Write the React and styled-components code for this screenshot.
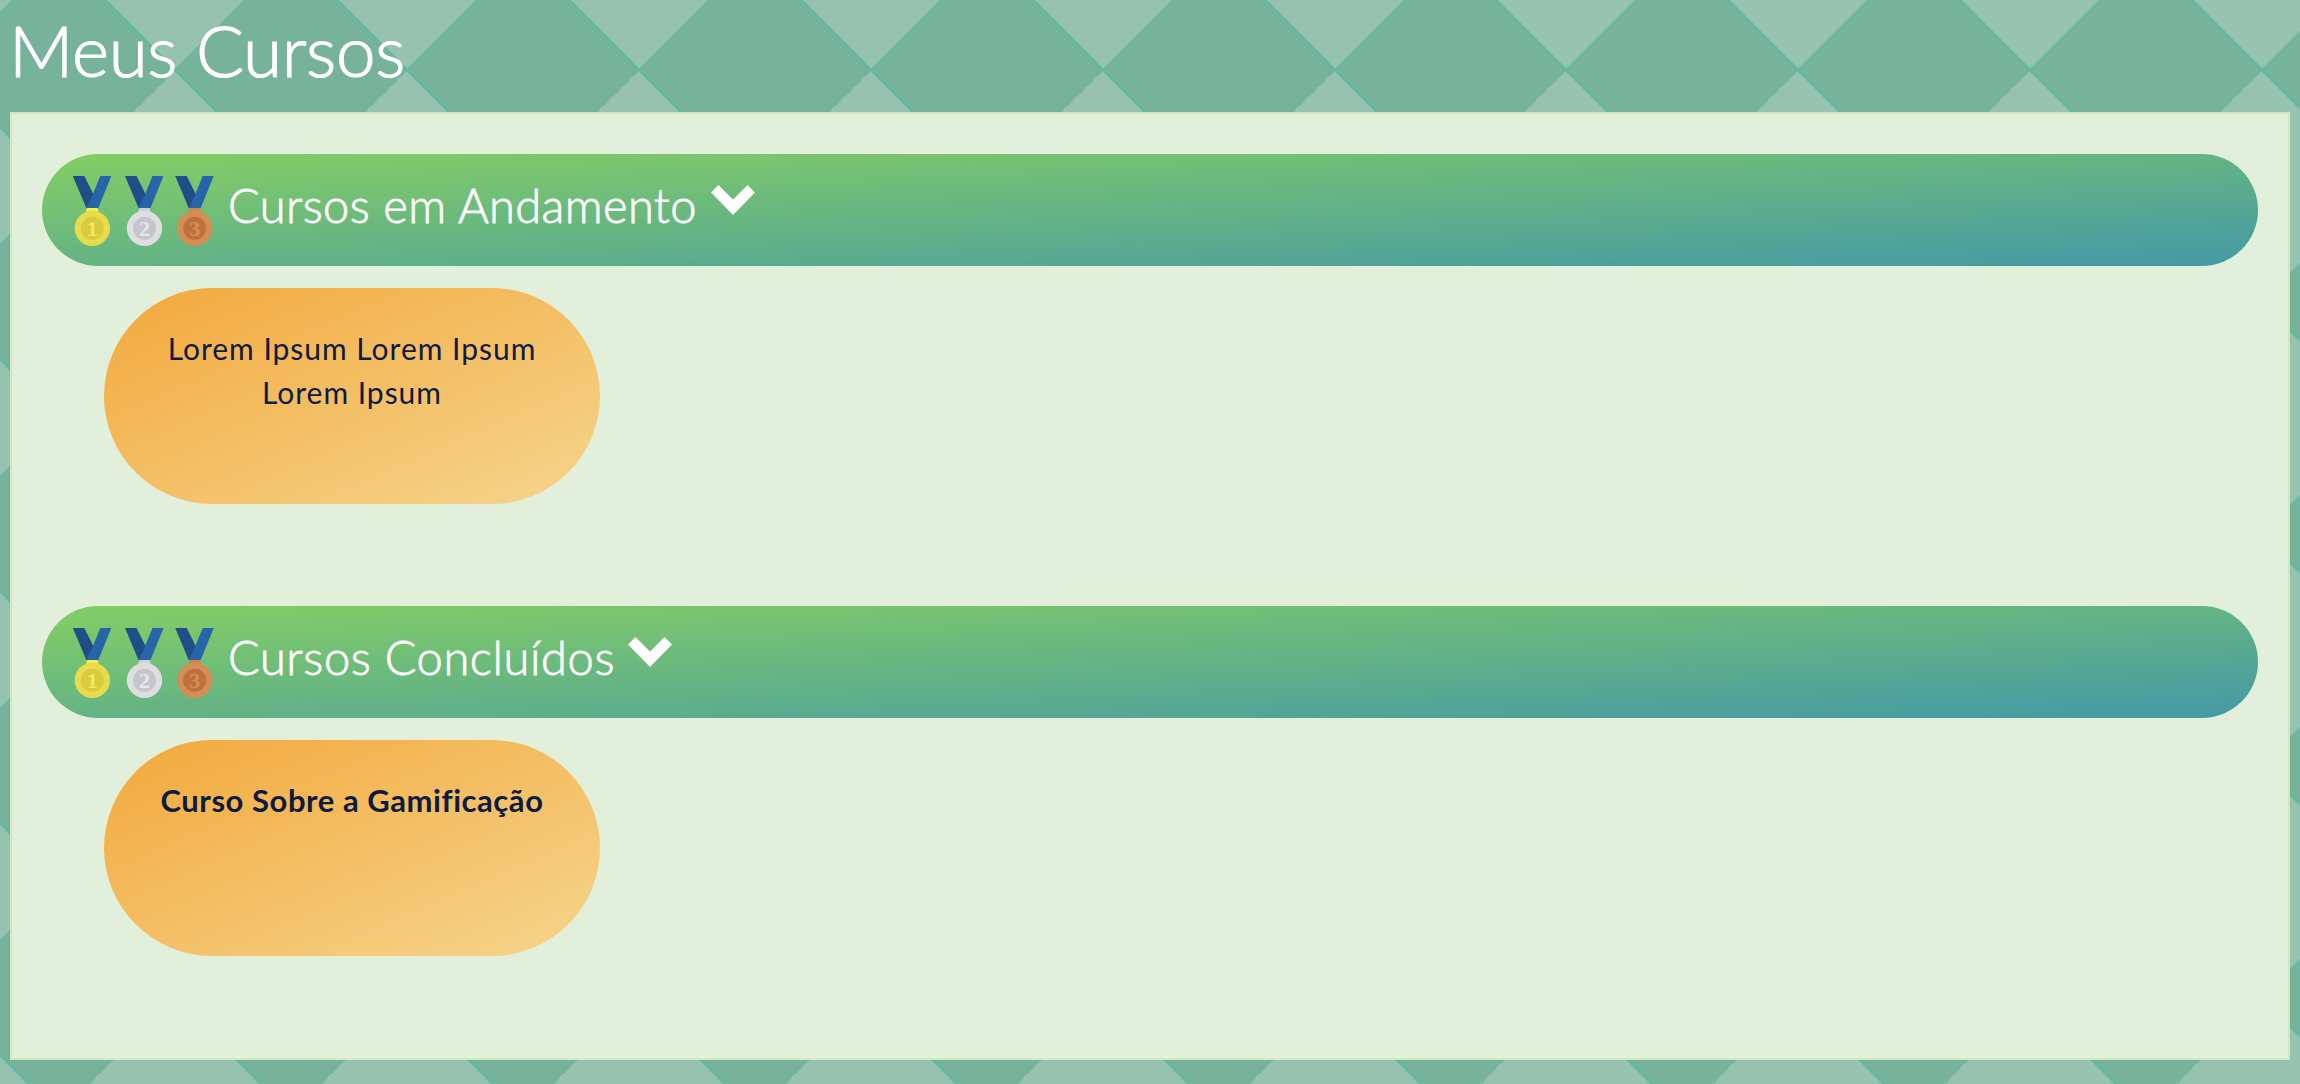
import React from "react";
import styled, { createGlobalStyle } from "styled-components";

const tile = `url("data:image/svg+xml,${encodeURIComponent(
  `<svg xmlns="http://www.w3.org/2000/svg" width="232" height="232" viewBox="0 0 232 232"><rect width="232" height="232" fill="#97c2af"/><path d="M116 0L232 116L116 232L0 116Z" fill="#76b39a"/><path d="M116 0L232 116M0 116L116 232" stroke="#5db9a0" stroke-width="2.6"/><path d="M0 116L116 0" stroke="#66baa3" stroke-width="1.8"/><path d="M232 116L116 232" stroke="#6cb89f" stroke-width="1.4" stroke-dasharray="9 5"/></svg>`
)}")`;

const Global = createGlobalStyle`
  * { box-sizing: border-box; }
  body {
    margin: 0;
    font-family: Lato, "Liberation Sans", sans-serif;
    background: #76b39a ${tile} -56.5px -45.5px / 231.85px 231.85px;
  }
`;

const Page = styled.main`
  min-height: 1084px;
  padding: 0 10px 24px;
  display: flex;
  flex-direction: column;
`;

const Title = styled.h1`
  margin: 0 0 0 -1px;
  height: 112px;
  padding-top: 7px;
  font-size: 71px;
  line-height: 86px;
  font-weight: 300;
  letter-spacing: -0.35px;
  -webkit-text-stroke: 1.2px #fff;
  color: #fff;
  white-space: nowrap;
`;

const Panel = styled.div`
  height: 948px;
  border: 2px solid #d0e7c0;
  background: #e2efda;
  padding: 40px 30px 0;
`;

const Section = styled.section`
  height: 452px;
`;

const Bar = styled.header`
  height: 112px;
  border-radius: 56px;
  padding-left: 30px;
  display: flex;
  align-items: flex-start;
  background: linear-gradient(to bottom right, #84ce64, #4499a5);
`;

const Medals = styled.svg`
  width: 142px;
  height: 70px;
  margin-top: 22px;
  flex: none;
`;

const Heading = styled.h2`
  margin: 20.5px 0 0 14px;
  width: ${(p) => p.$width}px;
  font-size: 47px;
  line-height: 60px;
  font-weight: 300;
  letter-spacing: ${(p) => p.$spacing}px;
  -webkit-text-stroke: 0.8px #fff;
  color: #fff;
  white-space: nowrap;
`;

const Chevron = styled.svg`
  width: 44px;
  height: 30px;
  margin-top: 30.5px;
  flex: none;
`;

const Card = styled.article`
  width: 496px;
  height: 216px;
  margin: 22px 0 0 62px;
  padding: 38px 54px 0;
  border-radius: 108px;
  background: linear-gradient(to bottom right, #f3a83c, #f5d58d);
  text-align: center;
  font-size: ${(p) => (p.$bold ? 31 : 30)}px;
  line-height: 44px;
  font-weight: ${(p) => (p.$bold ? 700 : 400)};
  letter-spacing: ${(p) => p.$spacing}px;
  color: #0d1b3f;
`;

const MEDALS = [
  { x: 20.3, label: "1", rim: "#e9dc4c", core: "#d9cb3f", text: "#f2e85c", knot: "#fbee55" },
  { x: 72.5, label: "2", rim: "#dedee2", core: "#c5c5cb", text: "#e8e8ec", knot: "#cfd0d2" },
  { x: 122.7, label: "3", rim: "#d68d55", core: "#bd723c", text: "#d98f58", knot: "#d0844c" },
];

const MedalRow = () => (
  <Medals viewBox="0 0 142 70" aria-hidden="true">
    {MEDALS.map((m) => (
      <g key={m.label} transform={`translate(${m.x} 0)`}>
        <path d="M-19.5 0H-8L1 18L-1 32H-6Z" fill="#1f4f86" />
        <path d="M8 0H19L6 32H-6L-1 22Z" fill="#2864a8" />
        <rect x="-6" y="32" width="12" height="5" rx="2" fill={m.knot} />
        <circle cy="52.3" r="17.7" fill={m.rim} />
        <circle cy="52.3" r="11.5" fill={m.core} />
        <text y="59.5" textAnchor="middle" fontFamily="Liberation Serif, serif" fontWeight="700" fontSize="22" fill={m.text}>
          {m.label}
        </text>
      </g>
    ))}
  </Medals>
);

const Group = ({ title, width, spacing, children }) => (
  <Section>
    <Bar>
      <MedalRow />
      <Heading $width={width} $spacing={spacing}>{title}</Heading>
      <Chevron viewBox="0 0 44 30">
        <path d="M7.5 0L22 14.5L36.5 0L44 7.5L22 30L0 7.5Z" fill="#fff" />
      </Chevron>
    </Bar>
    {children}
  </Section>
);

export default function App() {
  return (
    <>
      <Global />
      <Page>
        <Title>Meus Cursos</Title>
        <Panel>
          <Group title="Cursos em Andamento" width={483} spacing={0.4}>
            <Card $spacing={0.98}>Lorem Ipsum Lorem Ipsum Lorem Ipsum</Card>
          </Group>
          <Group title="Cursos Concluídos" width={400} spacing={0.6}>
            <Card $bold $spacing={0.55}>Curso Sobre a Gamificação</Card>
          </Group>
        </Panel>
      </Page>
    </>
  );
}
